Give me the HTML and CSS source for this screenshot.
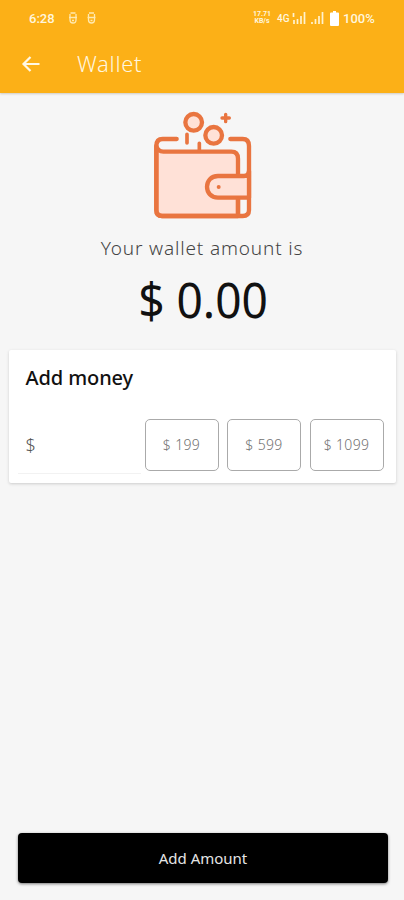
FILE: index.html
```html
<!DOCTYPE html>
<html lang="en">
<head>
<meta charset="utf-8">
<title>Wallet</title>
<link rel="stylesheet" href="styles.css">
</head>
<body>
<header class="header">
  <div class="status">
    <span class="time">6:28</span>
    <svg class="notices" width="30" height="14" viewBox="0 0 30 14" fill="none" stroke="#ffe9b0" stroke-width="1.3">
      <path d="M2.500 2h5M1 6.500h8M2 3v6q0 3 3 3t3-3V3M4 9.500h2M21 2h5M19.500 6.500h8M20.500 3v6q0 3 3 3t3-3V3M22.500 9.500h2"/>
    </svg>
    <span class="speed"><span>17.71</span><span>KB/s</span></span>
    <span class="network">4G</span>
    <svg class="signals" width="34" height="14" viewBox="0 0 34 14" stroke="#fff2cf" stroke-width="1.700">
      <path d="M1.500 2v4M2 9v4M5.500 8v5M9 5v8M12.500 1v12M20 11v2M23.500 8v5M27 5v8M30.500 1v12"/>
    </svg>
    <svg class="battery" width="9" height="15" viewBox="0 0 9 15" fill="#fff"><path d="M3 0h3v1.500h2q1 0 1 1V14q0 1-1 1H1q-1 0-1-1V2.500q0-1 1-1h2z"/></svg>
    <span class="percent">100%</span>
  </div>
  <div class="toolbar">
    <svg class="back" width="20" height="18" viewBox="0 0 20 18" fill="none" stroke="#fff8e5" stroke-width="2.200"><path d="M18.500 9H2.500M9.500 2 2.500 9l7 7"/></svg>
    <h1 class="title">Wallet</h1>
  </div>
</header>
<main class="content">
  <svg class="wallet" width="125" height="130" viewBox="0 0 375 390" fill="none" stroke="#e97540" stroke-width="13" stroke-linecap="round" stroke-linejoin="round">
    <path fill="#ffe1d7" d="M49 138Q54 155 70 155H274Q294 155 294 176V348H66Q49 348 49 330Z"/>
    <path d="M110 117H68Q49 117 49 138V330Q49 348 67 348H308Q327 348 327 330V138Q327 117 308 117H271"/>
    <path fill="#ffe1d7" d="M327 213Q326 228 312 228H234C190 228 190 293 234 293H327Z"/>
    <path d="M294 297V345"/>
    <circle cx="161" cy="67" r="25" fill="#ffe1d7"/>
    <circle cx="221" cy="106" r="25" fill="#ffe1d7"/>
    <path stroke-width="11" d="M141 103V129M178 130V150"/>
    <path stroke-width="10" d="M257 43V65M246 54H268"/>
    <circle cx="236" cy="261" r="6" fill="#e97540" stroke="none"/>
  </svg>
  <p class="caption"><span>Your wallet amount is</span></p>
  <p class="amount"><span>$ 0.00</span></p>
  <section class="card">
    <h2 class="heading">Add money</h2>
    <div class="entry">
      <div class="field">$</div>
      <button class="preset">$ 199</button>
      <button class="preset">$ 599</button>
      <button class="preset">$ 1099</button>
    </div>
  </section>
</main>
<footer class="footer"><button class="submit">Add Amount</button></footer>
</body>
</html>
```
FILE: styles.css
```css
* { box-sizing: border-box; }
body {
  margin: 0;
  height: 900px;
  display: flex;
  flex-direction: column;
  background: #f6f6f6;
  font-family: "Noto Sans", sans-serif;
  color: #111;
}
h1, h2, p { margin: 0; }
button { font-family: inherit; padding: 0; }
.header {
  height: 93px;
  background: #fcb017;
  box-shadow: 0 1px 2px #cfcac0;
}
.status {
  height: 36px;
  padding-left: 29px;
  display: flex;
  align-items: center;
  color: #fff6dd;
  font-family: Roboto, sans-serif;
}
.time { width: 39px; font-size: 13px; font-weight: 500; }
.speed {
  display: flex;
  flex-direction: column;
  align-items: center;
  width: 18px;
  margin: 0 6px 0 155px;
  font-size: 7px;
  line-height: 7px;
  font-weight: 700;
}
.network { width: 14px; font-size: 10px; font-weight: 500; }
.signals { margin-left: 1px; }
.battery { margin-left: 4px; }
.percent { margin-left: 4px; font-size: 13px; font-weight: 500; }
.toolbar {
  height: 56px;
  padding-left: 21px;
  display: flex;
  align-items: center;
}
.title {
  margin: -3px 0 0 36px;
  font-size: 22px;
  line-height: 30px;
  font-weight: 300;
  letter-spacing: 0.700px;
  color: #fff6df;
}
.content {
  flex: 1;
  display: flex;
  flex-direction: column;
  align-items: center;
}
.wallet { margin-top: 7px; }
.caption {
  height: 38px;
  line-height: 36px;
  font-size: 19px;
  font-weight: 300;
  letter-spacing: 0.850px;
  white-space: nowrap;
  color: #444;
}
.amount {
  height: 64px;
  line-height: 62px;
  font-size: 49px;
  white-space: nowrap;
}
.amount span { display: inline-block; transform: translateX(1px) scaleX(0.940); }
.card {
  width: 387px;
  height: 133px;
  margin-top: 18px;
  padding: 13px 12px 0 9px;
  border-radius: 2px;
  background: #fff;
  box-shadow: 0 1px 3px #ccc;
}
.heading {
  margin-left: 8px;
  font-size: 20px;
  line-height: 29px;
  font-weight: 500;
  letter-spacing: -0.100px;
}
.entry { display: flex; margin-top: 27px; }
.field {
  flex: 1;
  height: 55px;
  margin-right: 4px;
  padding-left: 8px;
  line-height: 52px;
  font-size: 18px;
  font-weight: 300;
  color: #555;
  border-bottom: 1px solid #f2f2f2;
}
.preset {
  width: 74px;
  height: 52px;
  padding-bottom: 2px;
  border: 1px solid #aaa;
  border-radius: 5px;
  background: #fff;
  font-size: 14px;
  font-weight: 300;
  letter-spacing: 0.350px;
  color: #707070;
}
.preset + .preset { margin-left: 8.500px; }
.footer { padding: 0 16px 17px 18px; display: flex; }
.submit {
  flex: 1;
  height: 50px;
  border: 0;
  border-radius: 4px;
  background: #000;
  box-shadow: 0 1px 3px #777;
  color: #e5e5e5;
  font-size: 15px;
}
```
